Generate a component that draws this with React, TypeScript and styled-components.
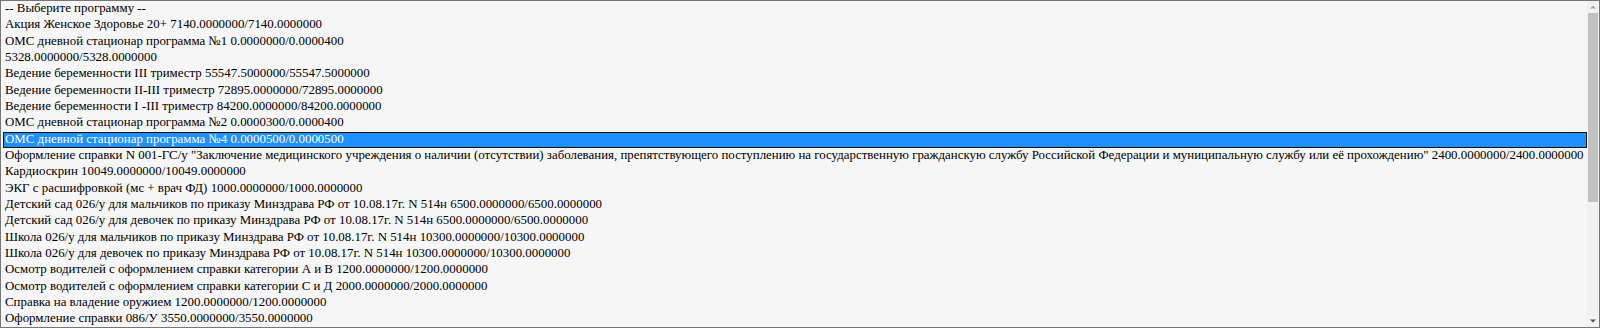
import React, { useState } from 'react';
import styled, { createGlobalStyle } from 'styled-components';

const GlobalStyle = createGlobalStyle`
  html, body {
    margin: 0;
    padding: 0;
    background: #ffffff;
  }
  * {
    box-sizing: border-box;
  }
`;

// список программ (как в <select size>)
const programs: string[] = [
  '-- Выберите программу --',
  'Акция Женское Здоровье 20+ 7140.0000000/7140.0000000',
  'ОМС дневной стационар программа №1 0.0000000/0.0000400',
  '5328.0000000/5328.0000000',
  'Ведение беременности III триместр 55547.5000000/55547.5000000',
  'Ведение беременности II-III триместр 72895.0000000/72895.0000000',
  'Ведение беременности I -III триместр 84200.0000000/84200.0000000',
  'ОМС дневной стационар программа №2 0.0000300/0.0000400',
  'ОМС дневной стационар программа №4 0.0000500/0.0000500',
  'Оформление справки N 001-ГС/у "Заключение медицинского учреждения о наличии (отсутствии) заболевания, препятствующего поступлению на государственную гражданскую службу Российской Федерации и муниципальную службу или её прохождению" 2400.0000000/2400.0000000',
  'Кардиоскрин 10049.0000000/10049.0000000',
  'ЭКГ с расшифровкой (мс + врач ФД) 1000.0000000/1000.0000000',
  'Детский сад 026/у для мальчиков по приказу Минздрава РФ от 10.08.17г. N 514н 6500.0000000/6500.0000000',
  'Детский сад 026/у для девочек по приказу Минздрава РФ от 10.08.17г. N 514н 6500.0000000/6500.0000000',
  'Школа 026/у для мальчиков по приказу Минздрава РФ от 10.08.17г. N 514н 10300.0000000/10300.0000000',
  'Школа 026/у для девочек по приказу Минздрава РФ от 10.08.17г. N 514н 10300.0000000/10300.0000000',
  'Осмотр водителей с оформлением справки категории А и В 1200.0000000/1200.0000000',
  'Осмотр водителей с оформлением справки категории С и Д 2000.0000000/2000.0000000',
  'Справка на владение оружием 1200.0000000/1200.0000000',
  'Оформление справки 086/У 3550.0000000/3550.0000000',
];

// сколько всего пунктов в списке (видно только 20)
const TOTAL_ITEMS = 32;

export default function App() {
  const [selected, setSelected] = useState(8);
  const thumbPct = (programs.length / TOTAL_ITEMS) * 100;

  return (
    <>
      <GlobalStyle />
      <ListBox role="listbox">
        <Options>
          {programs.map((title, i) => (
            <Option
              key={i}
              role="option"
              aria-selected={i === selected}
              $active={i === selected}
              onClick={() => setSelected(i)}
            >
              {title}
            </Option>
          ))}
        </Options>
        <ScrollBar>
          <ScrollButton>
            <svg width="12" height="12" viewBox="0 0 12 12">
              <path d="M3 7.5h6L6 4.5z" fill="#a3a3a3" />
            </svg>
          </ScrollButton>
          <Track>
            <Thumb style={{ height: `${thumbPct}%` }} />
          </Track>
          <ScrollButton>
            <svg width="12" height="12" viewBox="0 0 12 12">
              <path d="M3 4.5h6L6 7.5z" fill="#505050" />
            </svg>
          </ScrollButton>
        </ScrollBar>
      </ListBox>
    </>
  );
}

const ListBox = styled.div`
  display: flex;
  width: 1600px;
  height: 328px;
  background: #f6f6f6;
  border: 1px solid #767676;
  font-family: 'Liberation Serif', 'Times New Roman', serif;
  font-size: 12.9px;
  color: #000;
`;

const Options = styled.div`
  flex: 1;
  min-width: 0;
  overflow: hidden;
  padding-left: 2px;
`;

const Option = styled.div<{ $active: boolean }>`
  height: 16.33px;
  line-height: 15.33px;
  padding: 0 2px 1px;
  white-space: nowrap;
  cursor: default;
  background: ${(p) => (p.$active ? '#1e90ff' : 'transparent')};
  color: ${(p) => (p.$active ? '#ffffff' : '#000')};
  outline: ${(p) => (p.$active ? '1px solid #101010' : 'none')};
  outline-offset: -1px;
`;

const ScrollBar = styled.div`
  display: flex;
  flex-direction: column;
  width: 12px;
  flex-shrink: 0;
  background: #f1f1f1;
`;

const ScrollButton = styled.div`
  height: 12px;
  display: flex;
  align-items: center;
  justify-content: center;

  svg {
    display: block;
  }
`;

const Track = styled.div`
  flex: 1;
  padding: 0 1px;
`;

const Thumb = styled.div`
  width: 100%;
  background: #c1c1c1;
`;
